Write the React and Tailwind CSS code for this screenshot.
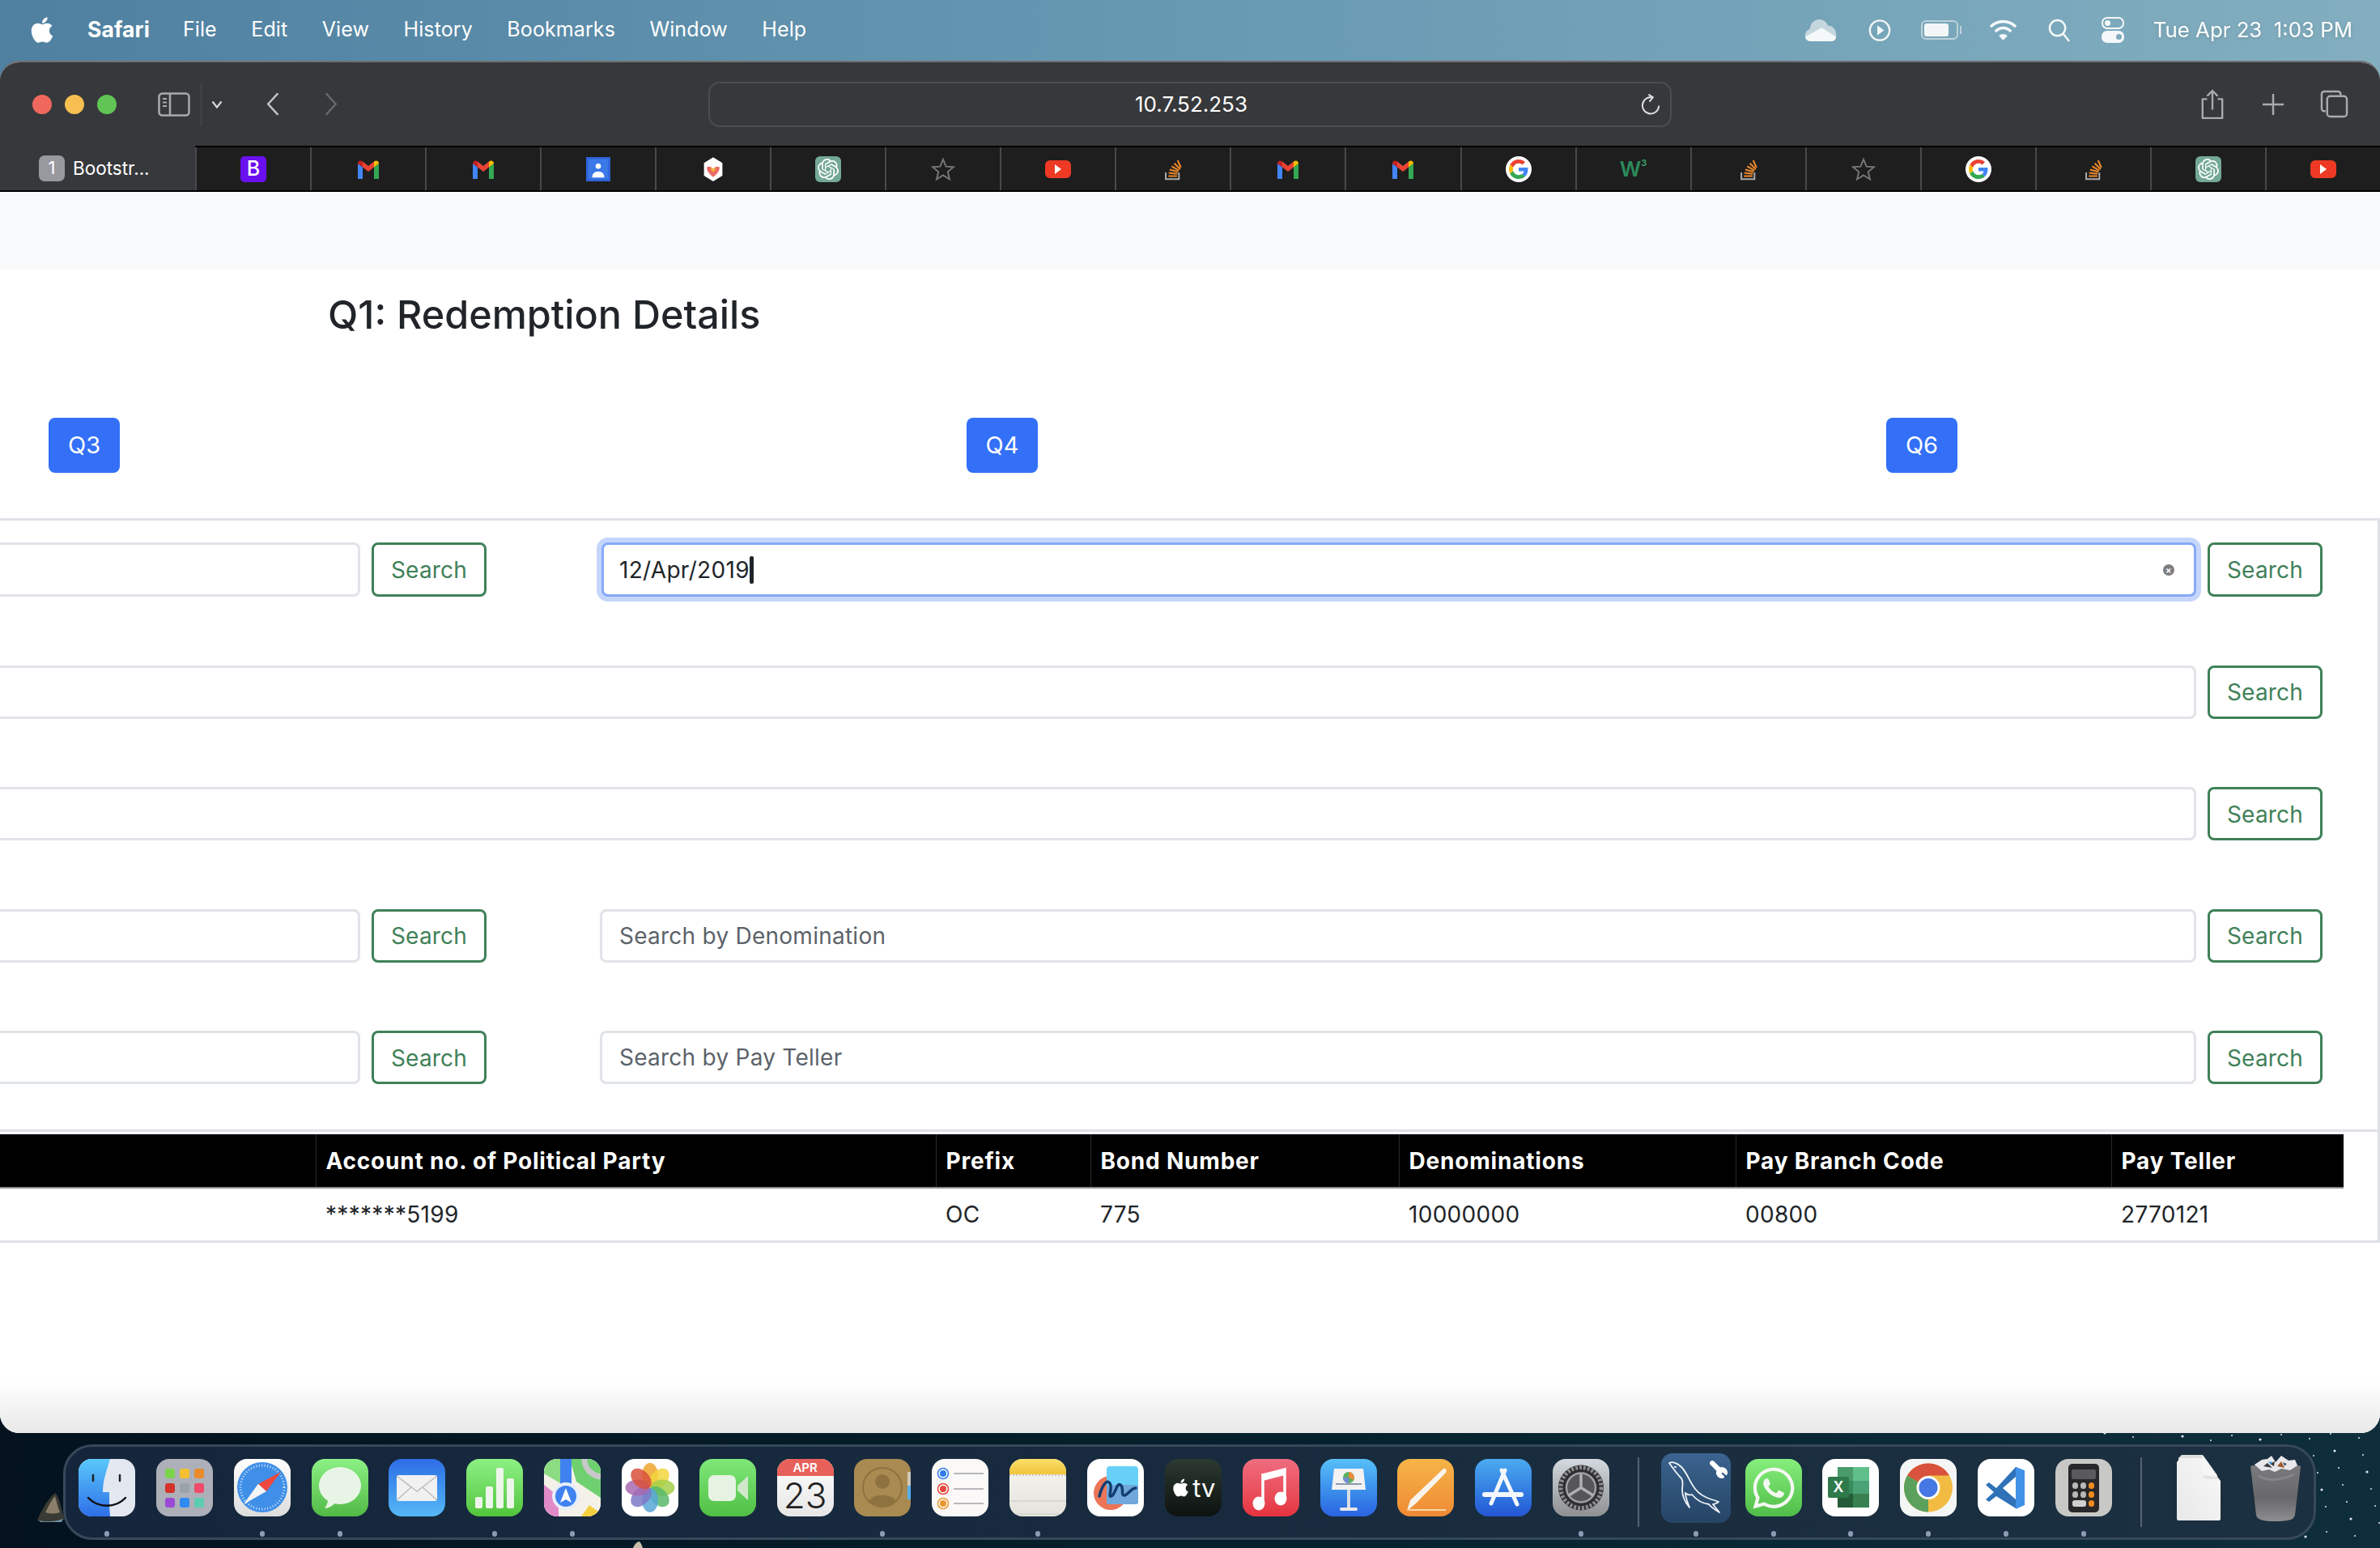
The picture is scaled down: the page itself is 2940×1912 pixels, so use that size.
import { FaApple, FaWhatsapp } from "react-icons/fa";
import { SiOpenai } from "react-icons/si";
import { Wrench } from "lucide-react";

const MENU = ["File", "Edit", "View", "History", "Bookmarks", "Window", "Help"];

const GmailIcon = () => (
  <svg viewBox="0 0 32 32" className="w-[32px] h-[32px]">
    <path d="M3 28V9l6 4.5V28H3z" fill="#4285f4" />
    <path d="M23 28V13.5L29 9v19h-6z" fill="#34a853" />
    <path d="M9 13.5 16 19l7-5.5V6.5L16 12 9 6.5z" fill="#ea4335" />
    <path d="M3 9c0-3 3-4.5 6-2.5v7L3 9z" fill="#c5221f" />
    <path d="M23 6.5c3-2 6-.5 6 2.5l-6 4.5z" fill="#fbbc04" />
  </svg>
);

const GoogleIcon = () => (
  <div className="w-[32px] h-[32px] rounded-full bg-white flex items-center justify-center">
    <svg viewBox="0 0 48 48" className="w-[24px] h-[24px]">
      <path d="M24 9.5c3.54 0 6.71 1.22 9.21 3.6l6.85-6.85C35.9 2.38 30.47 0 24 0 14.62 0 6.51 5.38 2.56 13.22l7.98 6.19C12.43 13.72 17.74 9.5 24 9.5z" fill="#ea4335" />
      <path d="M46.98 24.55c0-1.57-.15-3.09-.38-4.55H24v9.02h12.94c-.58 2.96-2.26 5.48-4.78 7.18l7.73 6c4.51-4.18 7.09-10.36 7.09-17.65z" fill="#4285f4" />
      <path d="M10.53 28.59c-.48-1.45-.76-2.99-.76-4.59s.27-3.14.76-4.59l-7.98-6.19C.92 16.46 0 20.12 0 24c0 3.88.92 7.54 2.56 10.78l7.97-6.19z" fill="#fbbc05" />
      <path d="M24 48c6.48 0 11.93-2.13 16.03-5.81l-7.73-6c-2.15 1.45-4.92 2.3-8.3 2.3-6.26 0-11.57-4.22-13.47-9.91l-7.98 6.19C6.51 42.62 14.62 48 24 48z" fill="#34a853" />
    </svg>
  </div>
);

const BootstrapIcon = () => (
  <div className="w-[32px] h-[32px] rounded-[5px] bg-[#6a10f0] flex items-center justify-center text-white text-[25px] leading-none font-medium">B</div>
);

const ContactsTab = () => (
  <svg viewBox="0 0 32 32" className="w-[32px] h-[30px]">
    <rect width="32" height="32" fill="#2f65d8" />
    <rect x="3" y="3" width="26" height="26" fill="#3b78e8" />
    <circle cx="16" cy="12" r="3.5" fill="#fff" />
    <path d="M8 27c0-5 3-8 8-8s8 3 8 8z" fill="#fff" />
  </svg>
);

const GemIcon = () => (
  <svg viewBox="0 0 32 34" className="w-[28px] h-[32px]">
    <path d="M16 0 29 8v18L16 34 3 26V8z" fill="#fff" />
    <path d="M7 14c4-2 7 0 9 3 2-3 5-5 9-3 0 6-4 10-9 14-5-4-9-8-9-14z" fill="#ed6a64" />
    <path d="M13 14c2 1 3 2 3 4 0-2 1-3 3-4v4l-3 3-3-3z" fill="#f2b72f" />
  </svg>
);

const GptIcon = () => (
  <div className="w-[32px] h-[32px] rounded-[6px] bg-[#74a898] flex items-center justify-center text-white">
    <SiOpenai size={26} />
  </div>
);

const StarIcon = () => (
  <svg viewBox="0 0 32 32" className="w-[30px] h-[30px]" fill="none" stroke="#77787a" strokeWidth="2">
    <path d="m16 3 3.8 9.4 10 .7-7.7 6.4 2.5 9.8L16 23.9l-8.6 5.4 2.5-9.8-7.7-6.4 10-.7z" />
  </svg>
);

const YoutubeIcon = () => (
  <div className="w-[32px] h-[22px] rounded-[6px] bg-[#ee3a24] flex items-center justify-center">
    <div className="w-0 h-0 border-y-[6px] border-y-transparent border-l-[8px] border-l-white" />
  </div>
);

const StackIcon = () => (
  <svg viewBox="0 0 32 34" className="w-[26px] h-[30px]">
    <path d="M5 22v10h20V22" fill="none" stroke="#aaa" strokeWidth="2.500" />
    <g stroke="#ef8a2c" strokeWidth="2.500">
      <path d="M9 27.500h13" />
      <path d="m9.500 22.500 13 1.500" />
      <path d="m11 17.500 12.500 3.500" />
      <path d="m14 12.500 11 6.500" />
      <path d="m18 8 9 9" />
      <path d="m23 3.500 5 11" />
    </g>
  </svg>
);

const W3Icon = () => (
  <div className="flex items-start text-[#2c8a5a] font-semibold leading-none">
    <span className="text-[26px]">W</span>
    <span className="text-[11px] text-[#3aa873]">3</span>
  </div>
);

const TABS = [
  BootstrapIcon, GmailIcon, GmailIcon, ContactsTab, GemIcon, GptIcon, StarIcon, YoutubeIcon, StackIcon,
  GmailIcon, GmailIcon, GoogleIcon, W3Icon, StackIcon, StarIcon, GoogleIcon, StackIcon, GptIcon, YoutubeIcon,
];

const Finder = () => (
  <div className="w-[70px] h-[71px] rounded-[16px] overflow-hidden">
    <svg viewBox="0 0 70 71" className="w-full h-full">
      <defs>
        <linearGradient id="finderBlue" x1="0" y1="0" x2="0" y2="1">
          <stop offset="0" stopColor="#5ac8fb" />
          <stop offset="1" stopColor="#2e6fe8" />
        </linearGradient>
      </defs>
      <rect width="70" height="71" fill="#e3e8f0" />
      <path d="M0 0h39C35 14 30 26 30 41h8c0 10 0 20 1 30H0z" fill="url(#finderBlue)" />
      <path d="M18 20v7M51 20v7" stroke="#222" strokeWidth="2.500" strokeLinecap="round" />
      <path d="M12 48c12 13 34 13 46 0" fill="none" stroke="#111" strokeWidth="2.500" strokeLinecap="round" />
    </svg>
  </div>
);

const PAD = ["#7bd44a", "#f4c032", "#e98a2c", "#d5332a", "#9aa4a6", "#ef4a68", "#9a4bd6", "#2f8af0", "#5ccdae"];
const Launchpad = () => (
  <div className="w-[70px] h-[71px] rounded-[16px] bg-[#adb0b8] grid grid-cols-3 gap-[6px] p-[11px] pt-[12px]">
    {PAD.map((c) => (
      <div key={c} className="rounded-[3px]" style={{ backgroundColor: c }} />
    ))}
  </div>
);

const Safari = () => (
  <div className="w-[70px] h-[71px] rounded-[16px] bg-linear-to-b from-white to-[#dcdcdc]">
    <svg viewBox="0 0 70 71" className="w-full h-full">
      <circle cx="35" cy="35" r="31" fill="#3f8fe8" />
      <circle cx="35" cy="35" r="27" fill="none" stroke="#cfe4fa" strokeWidth="3" strokeDasharray="1 2.500" />
      <path d="M35 35 12 56l18-25z" fill="#f4f4f4" />
      <path d="M30 31 58 16 40 40z" fill="#f0483e" />
      <path d="M30 31 40 40 12 56z" fill="#f4f4f4" />
    </svg>
  </div>
);

const Messages = () => (
  <div className="w-[70px] h-[71px] rounded-[16px] bg-linear-to-b from-[#8cf184] to-[#52b946]">
    <svg viewBox="0 0 70 71" className="w-full h-full">
      <ellipse cx="35" cy="33" rx="26" ry="23" fill="#e8f5e6" />
      <path d="M20 50c0 5-2 8-4 11 5 0 10-3 13-7z" fill="#e8f5e6" />
    </svg>
  </div>
);

const Mail = () => (
  <div className="w-[70px] h-[71px] rounded-[16px] bg-linear-to-b from-[#2f6ce5] to-[#56b8f5]">
    <svg viewBox="0 0 70 71" className="w-full h-full">
      <rect x="10" y="20" width="50" height="32" rx="3" fill="#f1f1f1" />
      <path d="m10 21 25 19 25-19M10 51l18-16M60 51 42 35" fill="none" stroke="#bdbdbd" strokeWidth="1.500" />
    </svg>
  </div>
);

const Numbers = () => (
  <div className="w-[70px] h-[71px] rounded-[16px] bg-linear-to-b from-[#8cf184] to-[#52c53a] flex items-end justify-center gap-[4px] pb-[10px]">
    <div className="w-[9px] h-[14px] rounded-[2px] bg-[#eef5ea]" />
    <div className="w-[9px] h-[27px] rounded-[2px] bg-[#eef5ea]" />
    <div className="w-[9px] h-[50px] rounded-[2px] bg-[#eef5ea]" />
    <div className="w-[9px] h-[37px] rounded-[2px] bg-[#eef5ea]" />
  </div>
);

const Maps = () => (
  <div className="w-[70px] h-[71px] rounded-[16px] overflow-hidden bg-white">
    <svg viewBox="0 0 70 71" className="w-full h-full">
      <rect width="70" height="71" fill="#f4f1e9" />
      <path d="M0 0h20v30L0 18z" fill="#8cdc84" />
      <path d="M32 0h38v48L40 28z" fill="#6fd070" />
      <path d="M0 32l18 14v25H0z" fill="#e08ac8" />
      <path d="M46 71l10-14 14 10v4z" fill="#f5cf40" />
      <path d="M20 0h14v42H20z" fill="#3f82f0" />
      <path d="M50 0c0 12 8 20 20 22" fill="none" stroke="#c8c8cc" strokeWidth="7" />
      <circle cx="27" cy="46" r="17" fill="#e8eef8" />
      <circle cx="27" cy="46" r="13" fill="#3f82f0" />
      <path d="m27 36 7 18-7-4-7 4z" fill="#fff" />
    </svg>
  </div>
);

const PETALS = ["#f0a52c", "#f2d53c", "#a4cf48", "#58b868", "#58a8d8", "#7c78c8", "#a868b0", "#d8503c"];
const Photos = () => (
  <div className="w-[70px] h-[71px] rounded-[16px] bg-white">
    <svg viewBox="0 0 70 71" className="w-full h-full">
      {PETALS.map((c, i) => (
        <ellipse key={c} cx="35" cy="20" rx="10" ry="15" fill={c} opacity="0.85" transform={`rotate(${i * 45} 35 35.500)`} />
      ))}
    </svg>
  </div>
);

const Facetime = () => (
  <div className="w-[70px] h-[71px] rounded-[16px] bg-linear-to-b from-[#7ee878] to-[#50c044]">
    <svg viewBox="0 0 70 71" className="w-full h-full">
      <rect x="11" y="20" width="34" height="32" rx="7" fill="#e6f3e2" />
      <path d="M47 33 60 21v30L47 39z" fill="#cfe8ca" />
    </svg>
  </div>
);

const Calendar = () => (
  <div className="w-[70px] h-[71px] rounded-[16px] overflow-hidden bg-linear-to-b from-white to-[#e6e6e6] flex flex-col items-center">
    <div className="w-full h-[21px] shrink-0 bg-[#e8605a] text-white text-[15px] leading-[21px] font-semibold text-center">APR</div>
    <div className="text-[#222] text-[44px] leading-[48px] font-light">23</div>
  </div>
);

const Contacts = () => (
  <div className="w-[70px] h-[71px] rounded-[16px] bg-[#a98a50]">
    <svg viewBox="0 0 70 71" className="w-full h-full">
      <rect x="66" y="16" width="4" height="17" fill="#cfc8b8" />
      <rect x="66" y="33" width="4" height="17" fill="#58b0ee" />
      <circle cx="35" cy="35" r="24" fill="none" stroke="#8e7240" strokeWidth="2" />
      <circle cx="35" cy="28" r="9" fill="#8e7240" />
      <path d="M18 53c3-11 31-11 34 0-8 8-26 8-34 0z" fill="#8e7240" />
    </svg>
  </div>
);

const Reminders = () => (
  <div className="w-[70px] h-[71px] rounded-[16px] bg-[#faf9f7]">
    <svg viewBox="0 0 70 71" className="w-full h-full">
      {[
        [18, "#2f7cf0"],
        [37, "#e8483e"],
        [55, "#ee962c"],
      ].map(([y, c]) => (
        <g key={y}>
          <circle cx="14" cy={y} r="6.500" fill="none" stroke={c} strokeWidth="1.500" />
          <circle cx="14" cy={y} r="4" fill={c} />
          <path d={`M27 ${y}h37`} stroke="#b8b8bc" strokeWidth="2" />
        </g>
      ))}
    </svg>
  </div>
);

const Notes = () => (
  <div className="w-[70px] h-[71px] rounded-[16px] overflow-hidden bg-linear-to-b from-[#f7f6f2] to-[#e4e3dc]">
    <div className="h-[19px] bg-linear-to-b from-[#fbdf68] to-[#f0c438]" />
    <div className="h-[16px] border-t-2 border-dotted border-[#c8c8c4]" />
    <div className="h-[18px] border-b-2 border-[#d8d8d2]" />
    <div className="h-[16px] border-b-2 border-[#d8d8d2]" />
  </div>
);

const Freeform = () => (
  <div className="w-[70px] h-[71px] rounded-[16px] bg-white">
    <svg viewBox="0 0 70 71" className="w-full h-full">
      <circle cx="29" cy="42" r="21" fill="#ec7558" />
      <rect x="24" y="9" width="39" height="47" rx="4" fill="#68d0f8" />
      <rect x="24" y="32" width="39" height="24" rx="3" fill="#70a8dc" />
      <path d="M15 46c3-12 9-22 13-16s-3 18 2 16 6-17 11-14 0 14 5 13 8-9 14-9" fill="none" stroke="#123e70" strokeWidth="3.500" strokeLinecap="round" />
    </svg>
  </div>
);

const AppleTv = () => (
  <div className="w-[70px] h-[71px] rounded-[16px] bg-linear-to-b from-[#2c3a32] to-[#0e1210] flex items-center justify-center gap-[2px] text-white">
    <FaApple size={25} />
    <span className="text-[31px] leading-none font-normal">tv</span>
  </div>
);

const Music = () => (
  <div className="w-[70px] h-[71px] rounded-[16px] bg-linear-to-b from-[#ee6c80] to-[#e5323e]">
    <svg viewBox="0 0 70 71" className="w-full h-full">
      <path d="M25 20 52 13v35" fill="none" stroke="#fff" strokeWidth="3.500" />
      <path d="M25 18v38" stroke="#fff" strokeWidth="3.500" />
      <path d="M25 21 52 14v6l-27 7z" fill="#fff" />
      <ellipse cx="20" cy="55" rx="7.500" ry="8.500" fill="#fff" />
      <ellipse cx="47" cy="49" rx="7.500" ry="8.500" fill="#fff" />
    </svg>
  </div>
);

const Keynote = () => (
  <div className="w-[70px] h-[71px] rounded-[16px] bg-linear-to-b from-[#58c0f8] to-[#2c62e0]">
    <svg viewBox="0 0 70 71" className="w-full h-full">
      <path d="M17 12h36l3 26H14z" fill="#f2f2f2" />
      <circle cx="35" cy="23" r="7" fill="#58b060" />
      <path d="M35 23v-7a7 7 0 0 1 6 10z" fill="#e88a3c" />
      <path d="M35 23v7a7 7 0 0 1-7-7z" fill="#7888d8" />
      <path d="M19 31h32" stroke="#8a9ab0" strokeWidth="2" />
      <rect x="33" y="38" width="4" height="24" fill="#d8dde4" />
      <rect x="24" y="60" width="22" height="4" rx="2" fill="#e8e8e8" />
    </svg>
  </div>
);

const Pages = () => (
  <div className="w-[70px] h-[71px] rounded-[16px] bg-linear-to-b from-[#f6b448] to-[#ee8a34]">
    <svg viewBox="0 0 70 71" className="w-full h-full">
      <path d="M56 13c3-3 6 0 4 4L23 55l-11 9 4-13z" fill="#f8f4ec" />
      <path d="M14 63h46" stroke="#f8d8a8" strokeWidth="2" />
    </svg>
  </div>
);

const AppStore = () => (
  <div className="w-[70px] h-[71px] rounded-[16px] bg-linear-to-b from-[#4caaf0] to-[#2656d4]">
    <svg viewBox="0 0 70 71" className="w-full h-full" stroke="#f4f7fc" strokeLinecap="round" fill="none">
      <path d="M37 14 20 55M33 14l19 42" strokeWidth="5" />
      <path d="M12 44h45" strokeWidth="6" />
    </svg>
  </div>
);

const SystemSettings = () => (
  <div className="w-[70px] h-[71px] rounded-[16px] bg-linear-to-b from-[#d4dadf] to-[#8e9092]">
    <svg viewBox="0 0 70 71" className="w-full h-full" fill="none">
      <circle cx="35" cy="35.500" r="28" fill="#2e2e30" />
      <circle cx="35" cy="35.500" r="25" stroke="#8c8c8e" strokeWidth="5" strokeDasharray="3 2" />
      <circle cx="35" cy="35.500" r="18" stroke="#a0a0a2" strokeWidth="2.500" fill="#565658" />
      <path d="M35 35.500V18M35 35.500 20 45M35 35.500 50 45" stroke="#b0b0b2" strokeWidth="3.500" />
    </svg>
  </div>
);

const Workbench = () => (
  <div className="w-[86px] h-[86px] shrink-0 rounded-[14px] bg-linear-to-b from-[#3b6490] to-[#264464] relative text-white">
    <svg viewBox="0 0 86 86" className="w-full h-full" fill="none" stroke="#eef3f8" strokeWidth="1.800" strokeLinejoin="round">
      <path d="M10 12c4-2 10 0 15 5 7 7 10 18 17 27 6 8 14 11 20 13 4 1 6 2 9 3-3 2-5 3-7 3 2 3 5 6 8 10-5-3-10-6-13-10-8-1-15-5-21-12-3 1-6 0-8-2 0 6 3 12 5 18-5-6-9-13-9-22 0-5 2-9-1-14-4-4-8-9-15-19z" />
      <path d="M16 17h3" />
    </svg>
    <Wrench size={24} className="absolute top-[8px] right-[3px] fill-white rotate-90" />
  </div>
);

const Whatsapp = () => (
  <div className="w-[70px] h-[71px] rounded-[16px] bg-linear-to-b from-[#86ee7c] to-[#4fbe48] flex items-center justify-center text-[#f4f8f2]">
    <FaWhatsapp size={58} />
  </div>
);

const Excel = () => (
  <div className="w-[70px] h-[71px] rounded-[16px] bg-white">
    <svg viewBox="0 0 70 71" className="w-full h-full">
      <rect x="19" y="10" width="39" height="17" fill="#4a9b6c" />
      <rect x="38" y="10" width="20" height="17" fill="#5fc08c" />
      <rect x="19" y="27" width="39" height="16" fill="#368a5c" />
      <rect x="38" y="27" width="20" height="16" fill="#4ba277" />
      <rect x="19" y="43" width="39" height="17" fill="#245c38" />
      <rect x="38" y="43" width="20" height="17" fill="#38804f" />
      <rect x="7" y="22" width="26" height="26" rx="2" fill="#2e7a4a" />
      <text x="20" y="41" textAnchor="middle" fill="#fff" fontSize="18" fontFamily="Inter, sans-serif" fontWeight="600">X</text>
    </svg>
  </div>
);

const Chrome = () => (
  <div className="w-[70px] h-[71px] rounded-[16px] bg-[#f4f6f6]">
    <svg viewBox="0 0 70 71" className="w-full h-full">
      <circle cx="35" cy="35.500" r="30" fill="#f2bc42" />
      <path d="M35 35.500 9 20.500A30 30 0 0 1 61 20.500H35z" fill="#d9523c" />
      <path d="M35 35.500 9 20.500A30 30 0 0 0 35 65.500z" fill="#5ba05c" />
      <circle cx="35" cy="35.500" r="14.500" fill="#fff" />
      <circle cx="35" cy="35.500" r="11.500" fill="#4578e4" />
    </svg>
  </div>
);

const Vscode = () => (
  <div className="w-[70px] h-[71px] rounded-[16px] bg-white">
    <svg viewBox="0 0 70 71" className="w-full h-full">
      <path d="M47 10 23 36l-9-7-4 3 10 9-10 9 4 3 9-7 24 15 3-1V11z" fill="#2f72b8" />
      <path d="M47 10 58 14v43l-11 5z" fill="#3f92e8" />
      <path d="m47 22-16 14 16 14z" fill="#fff" />
    </svg>
  </div>
);

const KEYS = ["#b8b8b8", "#b8b8b8", "#f08c20", "#b8b8b8", "#b8b8b8", "#f08c20"];
const Calculator = () => (
  <div className="w-[70px] h-[71px] rounded-[16px] bg-[#c8c8c6] flex items-center justify-center">
    <div className="w-[38px] h-[60px] rounded-[5px] bg-[#28282a] flex flex-col items-center pt-[7px] px-[4px] gap-[4px]">
      <div className="w-full h-[12px] rounded-[2px] bg-[#5a5a5c]" />
      <div className="grid grid-cols-3 gap-[3px]">
        {KEYS.map((c, i) => (
          <div key={i} className="w-[7px] h-[8px] rounded-full" style={{ backgroundColor: c }} />
        ))}
        <div className="col-span-2 h-[8px] rounded-[3px] bg-[#d0d0d0]" />
        <div className="h-[8px] rounded-full bg-[#f08c20]" />
      </div>
    </div>
  </div>
);

const FileStack = () => (
  <svg viewBox="0 0 54 81" className="w-[54px] h-[81px] shrink-0">
    <defs>
      <linearGradient id="fileBody" x1="1" y1="0" x2="0" y2="1">
        <stop offset="0" stopColor="#f8f8f8" />
        <stop offset="1" stopColor="#e8e8e8" />
      </linearGradient>
    </defs>
    <path d="M6 0h26l18 25v4H2V4z" fill="#dedede" />
    <path d="M0 9l4-5h28l22 28v47c0 1-1 2-2 2H2c-1 0-2-1-2-2z" fill="url(#fileBody)" />
    <path d="M32 1c-2 5-1 20 0 24 1 3 4 5 8 5h12c-6-10-12-20-20-29z" fill="#e2e2e2" />
    <path d="M32 1c-2 8-1 20 0 24l18 2C44 18 38 8 32 1z" fill="#f6f6f6" />
  </svg>
);

const Trash = () => (
  <svg viewBox="0 0 62 82" className="w-[62px] h-[82px] shrink-0">
    <defs>
      <linearGradient id="trashBody" x1="0" y1="0" x2="0" y2="1">
        <stop offset="0" stopColor="#7c7c7e" />
        <stop offset="0.6" stopColor="#68686a" />
        <stop offset="1" stopColor="#8e8e90" />
      </linearGradient>
    </defs>
    <path d="M0 14c14-5 48-5 62 0l-7 60c-1 6-8 8-24 8s-23-2-24-8z" fill="url(#trashBody)" />
    <path d="M5 12 14 6l7-1 5-4 5 8 7-8 9 6 8-1 3 7-9 6-11-2-8 4-7-3-9 2z" fill="#e8e8ea" />
    <path d="m16 14 5-4 6 6zM24 11l6-3-1 6z" fill="#3a3a3e" />
    <path d="m22 8 5 1-2 3z" fill="#2f9ae0" />
    <path d="m33 14 5-6 4 8z" fill="#a05a30" />
    <path d="m40 9 5 2-3 3z" fill="#4a5a70" />
    <path d="M10 26c12 8 32 4 44-2" fill="none" stroke="#9a9a9c" strokeWidth="3" opacity="0.5" />
  </svg>
);

const DOCK_LEFT = [
  [Finder, true], [Launchpad, false], [Safari, true], [Messages, true], [Mail, false], [Numbers, true],
  [Maps, true], [Photos, false], [Facetime, false], [Calendar, false], [Contacts, true], [Reminders, false],
  [Notes, true], [Freeform, false], [AppleTv, false], [Music, false], [Keynote, false], [Pages, false],
  [AppStore, false], [SystemSettings, true],
];
const DOCK_MID = [
  [Workbench, true], [Whatsapp, true], [Excel, true], [Chrome, true], [Vscode, true], [Calculator, true],
];
const DOCK_RIGHT = [[FileStack, false], [Trash, false]];

const DockItem = ({ Icon, running }) => (
  <div className="w-[70px] shrink-0 flex flex-col items-center gap-[18px]">
    <div className="w-[70px] h-[71px] flex items-center justify-center">
      <Icon />
    </div>
    <div className={`w-[6px] h-[7px] rounded-full ${running ? "bg-[#8c9cb4]" : "bg-transparent"}`} />
  </div>
);

const DockDivider = () => <div className="w-[2px] h-[86px] -mt-[2px] mx-[9px] bg-[#54636f] shrink-0" />;

// speckles of light on the water, right of the dock and above it
const SPECKS = Array.from({ length: 70 }, (_, i) => ({
  x: 2600 + ((i * 137) % 340),
  y: (i * 61) % 142,
  r: i % 4 === 0 ? 1.6 : 1,
}));

const Desktop = () => (
  <svg viewBox="0 0 2940 142" className="absolute left-0 bottom-0 w-[2940px] h-[142px]">
    {SPECKS.map((s, i) => (
      <circle key={i} cx={s.x} cy={s.y} r={s.r} fill="#dfe8ec" />
    ))}
    <path d="M46 108c4-10 12-26 22-34 6 4 8 24 12 32-8 4-24 6-34 2z" fill="#3a3a34" />
    <path d="M56 98c4-8 8-16 12-20 2 6 3 14 6 20-6 2-12 2-18 0z" fill="#8a7f68" />
    <path d="M48 108c8 2 20 2 30-2l-2 4H50z" fill="#6f93a8" />
    <path d="M782 142c2-5 5-8 8-8 2 2 3 5 4 8z" fill="#c8c0a8" />
  </svg>
);

const MenuStatus = () => (
  <div className="flex items-center text-white">
    <svg viewBox="0 0 42 32" className="w-[41px] h-[30px] mr-[38px]">
      <path d="M8 31C2 31 0 27 0 23c0-4 3-7 6-8C7 7 12 2 19 2c5 0 9 3 11 8 6 0 11 5 11 12 0 6-3 9-7 9z" fill="#c4d6de" />
      <path d="M0 25 22 13l19 12c-1 4-3 6-7 6H8c-4 0-7-2-8-6z" fill="#f5f8f9" />
    </svg>
    <svg viewBox="0 0 28 34" className="w-[28px] h-[33px] mr-[37px]" fill="none">
      <circle cx="14" cy="17" r="12.500" stroke="#f3f6f7" strokeWidth="2.500" />
      <path d="M11 10.500 19.500 17 11 23.500z" fill="#f3f6f7" />
    </svg>
    <div className="w-[46px] h-[24px] rounded-[6px] border-2 border-[#bdd2da] p-[2px] mr-[38px] relative">
      <div className="w-[30px] h-full rounded-[3px] bg-[#f3f6f7]" />
      <div className="absolute -right-[6px] top-[5px] w-[2px] h-[10px] bg-[#bdd2da]" />
    </div>
    <svg viewBox="0 0 36 28" className="w-[35px] h-[28px] mr-[38px]" fill="none" stroke="#f5f8f9" strokeWidth="3.500">
      <path d="M2 10c9-9 23-9 32 0" />
      <path d="M8 16c6-6 14-6 20 0" />
      <path d="M18 27 12.500 21.500c3-3 8-3 11 0z" fill="#f5f8f9" stroke="none" />
    </svg>
    <svg viewBox="0 0 28 30" className="w-[27px] h-[29px] mr-[39px]" fill="none" stroke="#f5f8f9" strokeWidth="2.500">
      <circle cx="12" cy="12" r="10" />
      <path d="m19 19 8 10" />
    </svg>
    <div className="w-[28px] h-[32px] flex flex-col gap-[2px] mr-[36px]">
      <div className="h-[15px] rounded-[7px] border-2 border-[#f5f8f9] flex items-center pl-[2px]">
        <div className="w-[7px] h-[7px] rounded-full bg-[#f5f8f9]" />
      </div>
      <div className="h-[15px] rounded-[7px] bg-[#f5f8f9] flex items-center justify-end pr-[3px]">
        <div className="w-[7px] h-[7px] rounded-full bg-[#7fa9ba]" />
      </div>
    </div>
    <span className="text-[25.800px] text-white whitespace-pre drop-shadow-sm">Tue Apr 23  1:03 PM</span>
  </div>
);

const Toolbar = () => (
  <div className="h-[103px] bg-[#37383b] flex items-center pl-[40px] pr-[39px] shrink-0">
    <div className="flex gap-[16px]">
      <div className="w-[24px] h-[24px] rounded-full bg-[#f0685d]" />
      <div className="w-[24px] h-[24px] rounded-full bg-[#f6bf4f]" />
      <div className="w-[24px] h-[24px] rounded-full bg-[#60c554]" />
    </div>
    <svg viewBox="0 0 40 30" className="w-[40px] h-[30px] ml-[51px]" fill="none" stroke="#a9aaac" strokeWidth="2.500">
      <rect x="1.500" y="1.500" width="37" height="27" rx="4" />
      <path d="M15 1.500v27" />
      <path d="M6 8h5M6 12.500h5M6 17h5" strokeWidth="2" />
    </svg>
    <div className="w-px h-[54px] bg-[#4a4b4e] ml-[13px]" />
    <svg viewBox="0 0 14 10" className="w-[14px] h-[10px] ml-[12px]" fill="none" stroke="#d8d8da" strokeWidth="2.200">
      <path d="m1.500 1.500 5.500 7 5.500-7" />
    </svg>
    <svg viewBox="0 0 16 30" className="w-[16px] h-[29px] ml-[54px]" fill="none" stroke="#c4c4c6" strokeWidth="2.500" strokeLinecap="round">
      <path d="M14 2 2 15l12 13" />
    </svg>
    <svg viewBox="0 0 16 30" className="w-[16px] h-[29px] ml-[56px]" fill="none" stroke="#66676a" strokeWidth="2.500" strokeLinecap="round">
      <path d="m2 2 12 13L2 28" />
    </svg>
    <div className="w-[1190px] h-[56px] ml-[458px] rounded-[14px] border-2 border-[#4c4d50] relative flex items-center justify-center">
      <span className="text-[26px] text-white pl-[3px]">10.7.52.253</span>
      <svg viewBox="0 0 26 30" className="absolute right-[12px] top-[13px] w-[24px] h-[28px]" fill="none" stroke="#dcdcde" strokeWidth="2.200">
        <path d="M15 4.500a11 11 0 1 0 9 12" strokeLinecap="round" />
        <path d="m11 1 5 3.500-4 5" strokeLinecap="round" />
      </svg>
    </div>
    <div className="flex-1" />
    <svg viewBox="0 0 32 40" className="w-[30px] h-[38px] mr-[46px]" fill="none" stroke="#a9aaac" strokeWidth="2.500">
      <path d="M9 13H3v25h26V13h-6" strokeLinejoin="round" />
      <path d="M16 27V2M9 9l7-7 7 7" />
    </svg>
    <svg viewBox="0 0 28 28" className="w-[28px] h-[28px] mr-[44px]" fill="none" stroke="#a9aaac" strokeWidth="2.500">
      <path d="M14 1v26M1 14h26" />
    </svg>
    <svg viewBox="0 0 36 36" className="w-[35px] h-[35px]" fill="none" stroke="#a9aaac" strokeWidth="2.500">
      <path d="M7 27H5a3 3 0 0 1-3-3V5a3 3 0 0 1 3-3h18a3 3 0 0 1 3 3v2" />
      <rect x="9" y="8" width="25" height="26" rx="4" />
    </svg>
  </div>
);

const TabBar = () => (
  <div className="h-[57px] flex shrink-0 border-b-2 border-black">
    <div className="w-[241px] shrink-0 bg-[#37383b] flex items-center pl-[48px] gap-[10px]">
      <div className="w-[32px] h-[32px] rounded-[7px] bg-[#98989f] flex items-center justify-center text-white text-[22px]">1</div>
      <span className="text-[22.500px] text-white">Bootstr...</span>
    </div>
    <div className="flex-1 flex border-t-2 border-black bg-[#1e1e1e]">
      {TABS.map((Icon, i) => (
        <div key={i} className="flex-1 flex items-center justify-center border-l-2 border-[#48494b]">
          <Icon />
        </div>
      ))}
    </div>
  </div>
);

const SearchButton = () => (
  <button className="w-[142px] h-full shrink-0 rounded-[8px] border-[3px] border-[#3f8159] bg-white text-[#3f8159] text-[28px] tracking-[0.2px] pt-[1px]">Search</button>
);

const SearchInput = ({ placeholder, className = "" }) => (
  <input
    readOnly
    placeholder={placeholder}
    className={`min-w-0 h-full rounded-[8px] border-[3px] border-[#e0e3e7] bg-white px-[21px] text-[28px] tracking-[0.25px] placeholder:text-[#5c636a] outline-none ${className}`}
  />
);

const LeftGroup = () => (
  <div className="w-[601px] h-full shrink-0 flex gap-[14px]">
    <SearchInput className="flex-1 -ml-[20px]" />
    <SearchButton />
  </div>
);

const HEADERS = [
  ["", "w-[390px]"],
  ["Account no. of Political Party", "w-[766px]"],
  ["Prefix", "w-[191px]"],
  ["Bond Number", "w-[381px]"],
  ["Denominations", "w-[416px]"],
  ["Pay Branch Code", "w-[464px]"],
  ["Pay Teller", "w-[287px]"],
];
const CELLS = ["", "*******5199", "OC", "775", "10000000", "00800", "2770121"];

const Page = () => (
  <div className="flex-1 min-h-0 bg-white flex flex-col text-[#212529]">
    <div className="h-[95px] bg-[#f8f9fa] shrink-0" />
    <h1 className="text-[48.500px] leading-[60px] font-medium pl-[405px] pt-[27px] shrink-0">Q1: Redemption Details</h1>
    <div className="grid grid-cols-[1134px_1136px_1fr] pl-[60px] pt-[97px] shrink-0">
      {["Q3", "Q4", "Q6"].map((q) => (
        <div key={q}>
          <button className="w-[88px] h-[68px] rounded-[8px] bg-[#3370f7] text-white text-[29px]">{q}</button>
        </div>
      ))}
    </div>
    <div className="mt-[56px] pt-[27px] pb-[56px] flex flex-col gap-[84.500px] border-y-[3px] border-r-[3px] border-[#dee2e6] overflow-hidden shrink-0">
      <div className="h-[67px] flex pr-[68px]">
        <LeftGroup />
        <div className="flex-1 min-w-0 h-full flex gap-[14px] ml-[142px]">
          <div className="flex-1 min-w-0 h-full rounded-[8px] border-[3px] border-[#86a9f9] ring-[6px] ring-[#c6d6fb] bg-white pl-[19px] pr-[24px] flex items-center text-[28px] tracking-[0.3px] pt-[1px]">
            <span>12/Apr/2019</span>
            <span className="w-[5px] h-[34px] rounded-[2px] bg-[#212529]" />
            <span className="flex-1" />
            <span className="w-[14px] h-[14px] rounded-full bg-[#7d7d7f] flex items-center justify-center text-white text-[11px] leading-none font-bold">×</span>
          </div>
          <SearchButton />
        </div>
      </div>
      <div className="h-[66px] flex gap-[14px] pr-[68px]">
        <SearchInput className="flex-1 -ml-[20px]" />
        <SearchButton />
      </div>
      <div className="h-[66px] flex gap-[14px] pr-[68px]">
        <SearchInput className="flex-1 -ml-[20px]" />
        <SearchButton />
      </div>
      <div className="h-[66px] flex pr-[68px]">
        <LeftGroup />
        <div className="flex-1 min-w-0 h-full flex gap-[14px] ml-[140px]">
          <SearchInput className="flex-1" placeholder="Search by Denomination" />
          <SearchButton />
        </div>
      </div>
      <div className="h-[66px] flex pr-[68px]">
        <LeftGroup />
        <div className="flex-1 min-w-0 h-full flex gap-[14px] ml-[140px]">
          <SearchInput className="flex-1" placeholder="Search by Pay Teller" />
          <SearchButton />
        </div>
      </div>
    </div>
    <div className="pt-[3px] border-b-[3px] border-r-[3px] border-[#dee2e6] shrink-0">
      <table className="w-[2895px] table-fixed border-collapse">
        <thead>
          <tr className="h-[66px] bg-black text-white border-b-2 border-[#8a8a8a]">
            {HEADERS.map(([label, width], i) => (
              <th key={i} className={`${width} px-[12px] text-left text-[28px] tracking-[0.8px] font-bold border-l border-[#2a2a2a] first:border-l-0`}>{label}</th>
            ))}
          </tr>
        </thead>
        <tbody>
          <tr className="h-[65px]">
            {CELLS.map((c, i) => (
              <td key={i} className="px-[12px] text-[28px] tracking-[0.3px]">{c}</td>
            ))}
          </tr>
        </tbody>
      </table>
    </div>
    <div className="flex-1" />
    <div className="h-[64px] shrink-0 bg-linear-to-b from-white to-[#e8e8e8]" />
  </div>
);

export default function App() {
  return (
    <div className="w-[2940px] h-[1912px] relative flex flex-col overflow-hidden bg-[#03121e] font-['Inter',sans-serif]">
      {/* Menu bar */}
      <div className="h-[95px] -mb-[20px] shrink-0 bg-linear-to-r from-[#4f80a0] via-[#6899b3] to-[#82aebf] pt-[14px] px-[34px] flex justify-between items-start text-white">
        <div className="flex items-center h-[46px] text-[25px] tracking-[0.1px]">
          <FaApple size={36} className="mr-[38px]" />
          <span className="font-bold text-[26.500px] mr-[41px]">Safari</span>
          <div className="flex gap-[42.500px]">
            {MENU.map((m) => (
              <span key={m}>{m}</span>
            ))}
          </div>
        </div>
        <div className="h-[46px] flex items-center">
          <MenuStatus />
        </div>
      </div>

      {/* Browser window */}
      <div className="h-[1695px] shrink-0 relative z-10 rounded-t-[24px] rounded-b-[24px] overflow-hidden flex flex-col border-t-2 border-[#707173] bg-white">
        <Toolbar />
        <TabBar />
        <Page />
      </div>

      {/* Desktop and dock */}
      <div className="flex-1 -mt-[30px] pt-[44px] pl-[78px] bg-linear-to-r from-[#03121e] via-[#05202c] to-[#0f2e3c]">
        <Desktop />
        <div className="w-[2783px] h-[118px] relative rounded-[36px] border-[3px] border-[#37485a] bg-linear-to-r from-[#15263c] to-[#1b3040] pt-[15px] pl-[16px] flex items-start gap-[25.850px]">
          {DOCK_LEFT.map(([Icon, running], i) => (
            <DockItem key={i} Icon={Icon} running={running} />
          ))}
          <DockDivider />
          {DOCK_MID.map(([Icon, running], i) => (
            <DockItem key={i} Icon={Icon} running={running} />
          ))}
          <DockDivider />
          {DOCK_RIGHT.map(([Icon, running], i) => (
            <DockItem key={i} Icon={Icon} running={running} />
          ))}
        </div>
      </div>
    </div>
  );
}
